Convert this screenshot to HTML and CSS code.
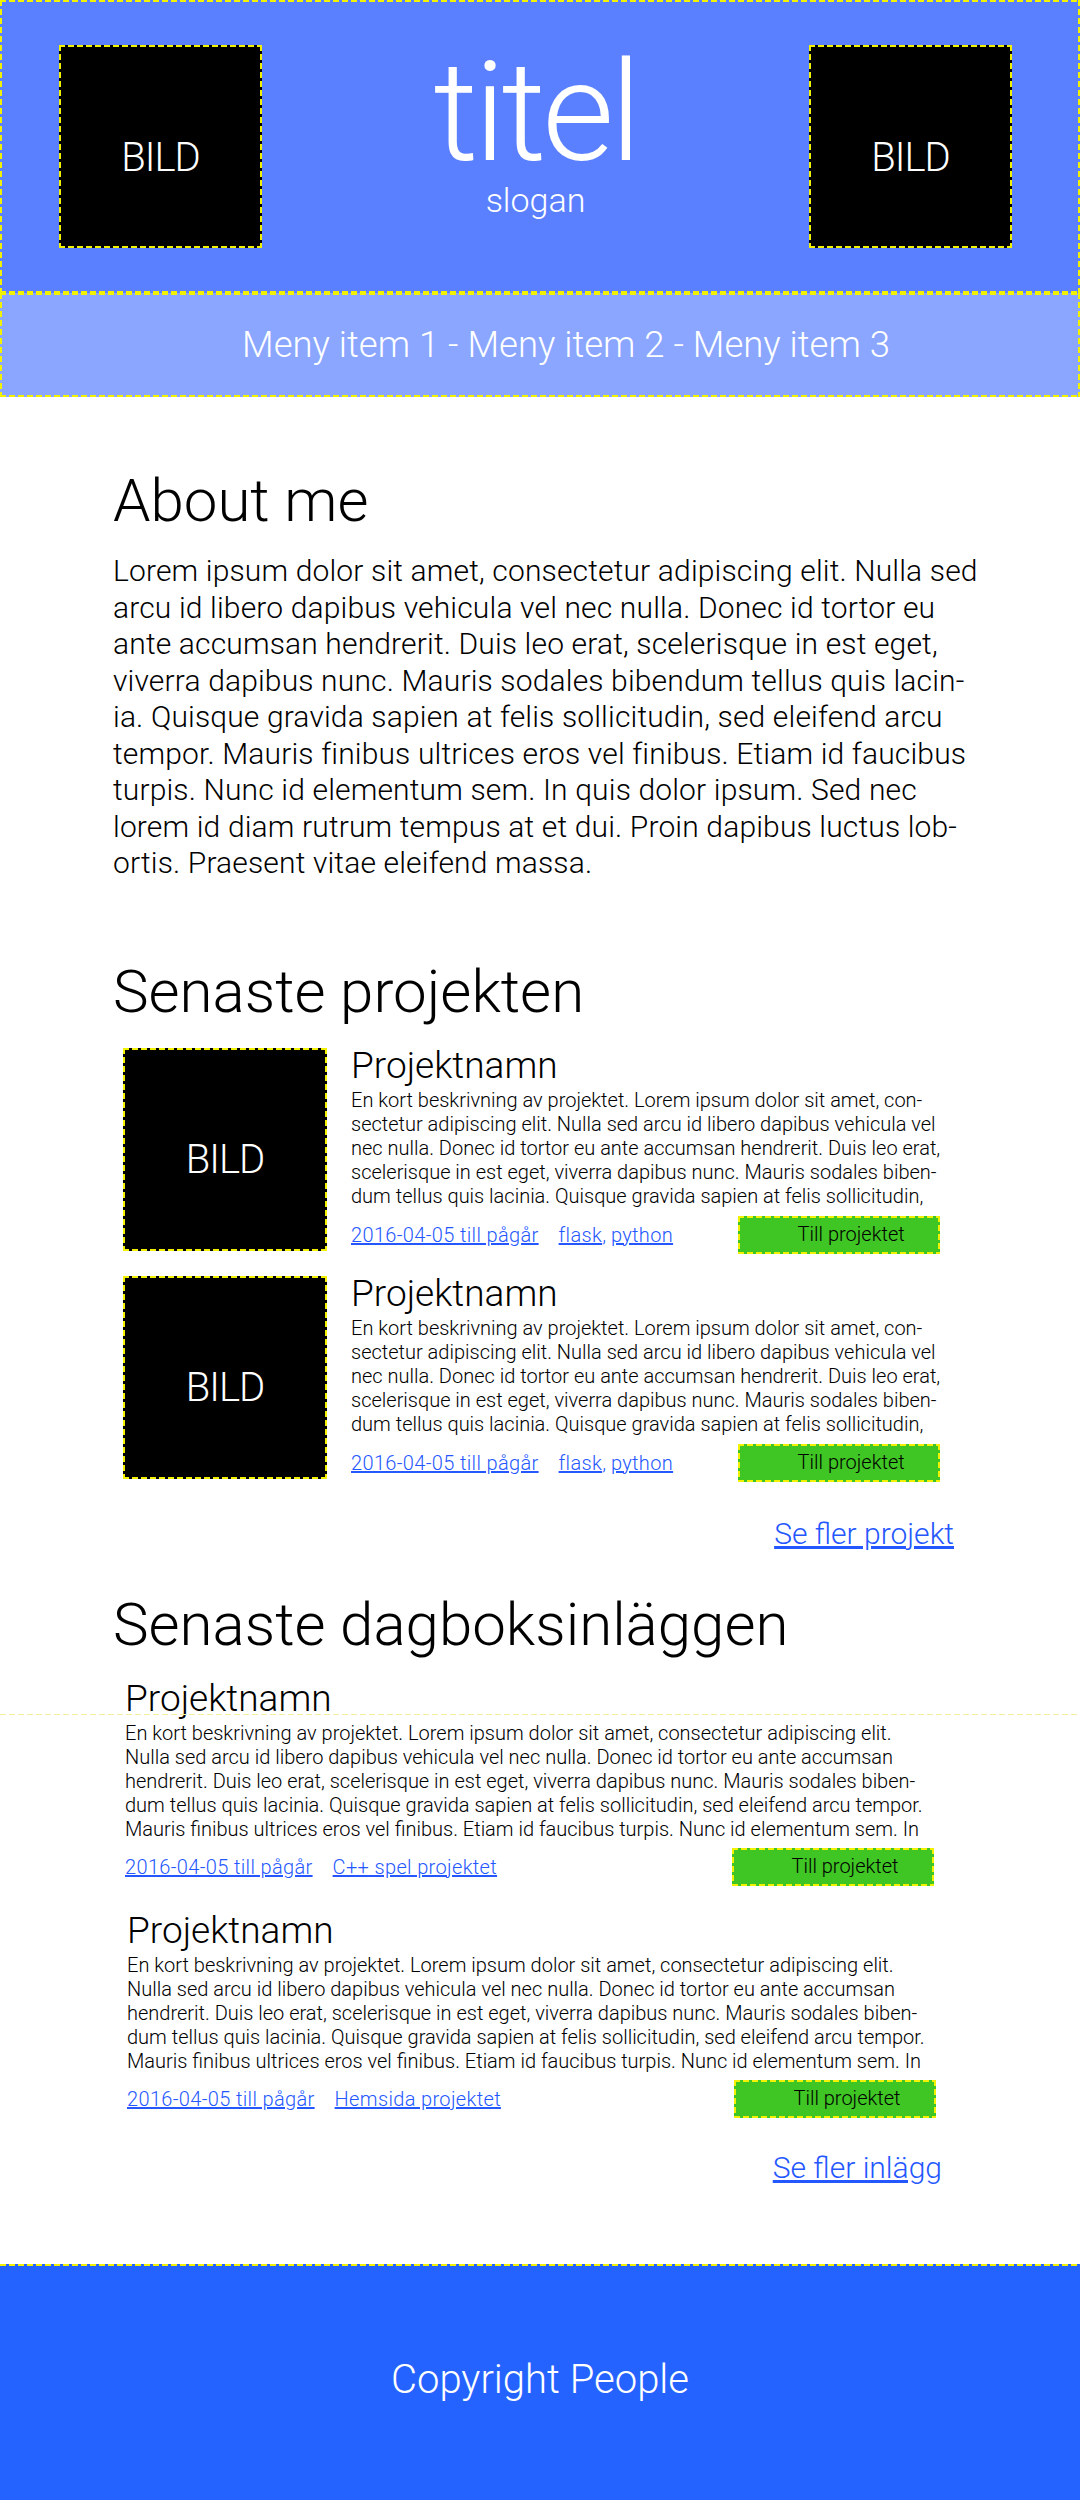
FILE: index.html
```html
<!DOCTYPE html>
<html lang="sv">
<head>
<meta charset="utf-8">
<title>titel</title>
<link rel="stylesheet" href="styles.css">
</head>
<body>
<header class="site-header dash">
  <div class="pic dash">BILD</div>
  <div class="brand">
    <h1 class="brand-title">titel</h1>
    <p class="brand-slogan">slogan</p>
  </div>
  <div class="pic dash">BILD</div>
</header>
<nav class="menu dash">
  <a href="#">Meny item 1</a> - <a href="#">Meny item 2</a> - <a href="#">Meny item 3</a>
</nav>
<main class="content">
  <section class="about">
    <h2 class="section-title">About me</h2>
    <p class="about-text">Lorem ipsum dolor sit amet, consectetur adipiscing elit. Nulla sed<br>arcu id libero dapibus vehicula vel nec nulla. Donec id tortor eu<br>ante accumsan hendrerit. Duis leo erat, scelerisque in est eget,<br>viverra dapibus nunc. Mauris sodales bibendum tellus quis lacin-<br>ia. Quisque gravida sapien at felis sollicitudin, sed eleifend arcu<br>tempor. Mauris finibus ultrices eros vel finibus. Etiam id faucibus<br>turpis. Nunc id elementum sem. In quis dolor ipsum. Sed nec<br>lorem id diam rutrum tempus at et dui. Proin dapibus luctus lob-<br>ortis. Praesent vitae eleifend massa.</p>
  </section>

  <section class="projects">
    <h2 class="section-title section-title--projects">Senaste projekten</h2>
    <article class="project">
      <div class="pic dash">BILD</div>
      <div class="project-body">
        <h3 class="item-title">Projektnamn</h3>
        <p class="item-desc">En kort beskrivning av projektet. Lorem ipsum dolor sit amet, con-<br>sectetur adipiscing elit. Nulla sed arcu id libero dapibus vehicula vel<br>nec nulla. Donec id tortor eu ante accumsan hendrerit. Duis leo erat,<br>scelerisque in est eget, viverra dapibus nunc. Mauris sodales biben-<br>dum tellus quis lacinia. Quisque gravida sapien at felis sollicitudin,</p>
        <div class="meta">
          <a href="#">2016-04-05 till pågår</a>
          <span class="tags"><a href="#">flask</a>, <a href="#">python</a></span>
          <a class="btn dash" href="#">Till projektet</a>
        </div>
      </div>
    </article>
    <article class="project">
      <div class="pic dash">BILD</div>
      <div class="project-body">
        <h3 class="item-title">Projektnamn</h3>
        <p class="item-desc">En kort beskrivning av projektet. Lorem ipsum dolor sit amet, con-<br>sectetur adipiscing elit. Nulla sed arcu id libero dapibus vehicula vel<br>nec nulla. Donec id tortor eu ante accumsan hendrerit. Duis leo erat,<br>scelerisque in est eget, viverra dapibus nunc. Mauris sodales biben-<br>dum tellus quis lacinia. Quisque gravida sapien at felis sollicitudin,</p>
        <div class="meta">
          <a href="#">2016-04-05 till pågår</a>
          <span class="tags"><a href="#">flask</a>, <a href="#">python</a></span>
          <a class="btn dash" href="#">Till projektet</a>
        </div>
      </div>
    </article>
    <div class="more more--projects"><a href="#">Se fler projekt</a></div>
  </section>

  <section class="diary">
    <h2 class="section-title section-title--diary">Senaste dagboksinläggen</h2>
    <article class="entry entry--first">
      <h3 class="item-title">Projektnamn</h3>
      <p class="item-desc">En kort beskrivning av projektet. Lorem ipsum dolor sit amet, consectetur adipiscing elit.<br>Nulla sed arcu id libero dapibus vehicula vel nec nulla. Donec id tortor eu ante accumsan<br>hendrerit. Duis leo erat, scelerisque in est eget, viverra dapibus nunc. Mauris sodales biben-<br>dum tellus quis lacinia. Quisque gravida sapien at felis sollicitudin, sed eleifend arcu tempor.<br>Mauris finibus ultrices eros vel finibus. Etiam id faucibus turpis. Nunc id elementum sem. In</p>
      <div class="meta">
        <a href="#">2016-04-05 till pågår</a>
        <span class="tags"><a href="#">C++ spel projektet</a></span>
        <a class="btn dash" href="#">Till projektet</a>
      </div>
    </article>
    <article class="entry entry--second">
      <h3 class="item-title">Projektnamn</h3>
      <p class="item-desc">En kort beskrivning av projektet. Lorem ipsum dolor sit amet, consectetur adipiscing elit.<br>Nulla sed arcu id libero dapibus vehicula vel nec nulla. Donec id tortor eu ante accumsan<br>hendrerit. Duis leo erat, scelerisque in est eget, viverra dapibus nunc. Mauris sodales biben-<br>dum tellus quis lacinia. Quisque gravida sapien at felis sollicitudin, sed eleifend arcu tempor.<br>Mauris finibus ultrices eros vel finibus. Etiam id faucibus turpis. Nunc id elementum sem. In</p>
      <div class="meta">
        <a href="#">2016-04-05 till pågår</a>
        <span class="tags"><a href="#">Hemsida projektet</a></span>
        <a class="btn dash" href="#">Till projektet</a>
      </div>
    </article>
    <div class="more more--diary"><a href="#">Se fler inlägg</a></div>
  </section>
</main>
<footer class="site-footer dash-top">Copyright People</footer>
<div class="guide"></div>
</body>
</html>
```

FILE: styles.css
```css
* { box-sizing: border-box; }

html, body {
  margin: 0;
  padding: 0;
}

body {
  position: relative;
  background: #ffffff;
  color: #000000;
  font-family: Roboto, "Liberation Sans", Arial, sans-serif;
  font-weight: 300;
}

/* dashed "selection" outline, drawn without affecting layout */
.dash {
  background-image:
    repeating-linear-gradient(90deg, #f2f200 0 6px, transparent 6px 9px),
    repeating-linear-gradient(90deg, #f2f200 0 6px, transparent 6px 9px),
    repeating-linear-gradient(180deg, #f2f200 0 6px, transparent 6px 9px),
    repeating-linear-gradient(180deg, #f2f200 0 6px, transparent 6px 9px);
  background-size: 100% 2px, 100% 2px, 2px 100%, 2px 100%;
  background-position: left top, left bottom, left top, right top;
  background-repeat: no-repeat;
}

.dash-top {
  background-image: repeating-linear-gradient(90deg, #f2f200 0 6px, transparent 6px 9px);
  background-size: 100% 2px;
  background-position: left top;
  background-repeat: no-repeat;
}

/* header */
.site-header {
  background-color: #5a80ff;
  height: 293px;
  display: grid;
  grid-template-columns: 203px 1fr 203px;
  align-items: start;
  padding: 45px 68px 0 59px;
}

.pic {
  background-color: #000000;
  color: #ffffff;
  width: 203px;
  height: 203px;
  display: flex;
  align-items: center;
  justify-content: center;
  padding-top: 22px;
  font-size: 40px;
  line-height: 48px;
  letter-spacing: -1px;
}

.brand {
  text-align: center;
  color: #ffffff;
  margin-top: 1px;
}

.brand-title {
  margin: 0;
  font-weight: 300;
  font-size: 139px;
  line-height: 134px;
  letter-spacing: -4px;
}

.brand-slogan {
  margin: 0;
  font-size: 34px;
  line-height: 40px;
}

/* nav */
.menu {
  background-color: #8aa6ff;
  height: 104px;
  line-height: 104px;
  font-size: 36.5px;
  color: #ffffff;
  text-align: center;
  padding-left: 52px;
  white-space: nowrap;
}

.menu a {
  color: #ffffff;
  text-decoration: none;
}

/* main */
.content {
  padding: 68px 126px 78px 113px;
}

.section-title {
  margin: 0;
  font-weight: 300;
  font-size: 60px;
  line-height: 72px;
  white-space: nowrap;
}

.section-title--projects { margin-top: 74px; }
.section-title--diary { margin-top: 37px; }

.about-text {
  margin: 16px 0 0;
  font-size: 30px;
  line-height: 36.5px;
  letter-spacing: 0.15px;
  white-space: nowrap;
}

.project {
  display: flex;
  align-items: flex-start;
  margin: 20px 0 0 10px;
}

.project + .project { margin-top: 22px; }

.project .pic {
  flex: 0 0 204px;
  width: 204px;
}

.project-body {
  flex: 0 0 583px;
  margin-left: 24px;
}

.item-title {
  margin: 0;
  font-weight: 300;
  font-size: 37px;
  line-height: 36px;
  white-space: nowrap;
}

.item-desc {
  margin: 4px 0 0;
  font-size: 20px;
  line-height: 24.2px;
  white-space: nowrap;
}

.meta {
  display: flex;
  align-items: center;
  gap: 20px;
  margin-top: 7px;
  font-size: 20px;
  line-height: 38px;
  white-space: nowrap;
  color: #2457ff;
}

.meta a {
  color: #2457ff;
  letter-spacing: 0.35px;
}

.meta .btn {
  margin-left: auto;
  width: 202px;
  height: 38px;
  line-height: 36px;
  padding-left: 24px;
  text-align: center;
  color: #000000;
  background-color: #3fc524;
  text-decoration: none;
  letter-spacing: 0;
}

.entry {
  margin-left: 12px;
  width: 809px;
}

.entry--first { margin-top: 20px; }
.entry--second { margin-top: 27px; margin-left: 14px; }

.entry .item-desc { margin-top: 4px; }
.entry .meta { margin-top: 6px; }

.more {
  text-align: right;
  font-size: 30px;
  line-height: 36px;
}

.more a { color: #2457ff; }

.more--projects { margin-top: 34px; }
.more--diary { margin-top: 32px; padding-right: 12px; }

/* footer */
.site-footer {
  background-color: #2463ff;
  color: #ffffff;
  min-height: 238px;
  padding-top: 92px;
  text-align: center;
  font-size: 40px;
  line-height: 48px;
}

/* faint guide line across the diary section */
.guide {
  position: absolute;
  left: 0;
  right: 0;
  top: 1714px;
  height: 1px;
  background-image: repeating-linear-gradient(90deg, #f4ef9a 0 6px, transparent 6px 9px);
  pointer-events: none;
}
```
